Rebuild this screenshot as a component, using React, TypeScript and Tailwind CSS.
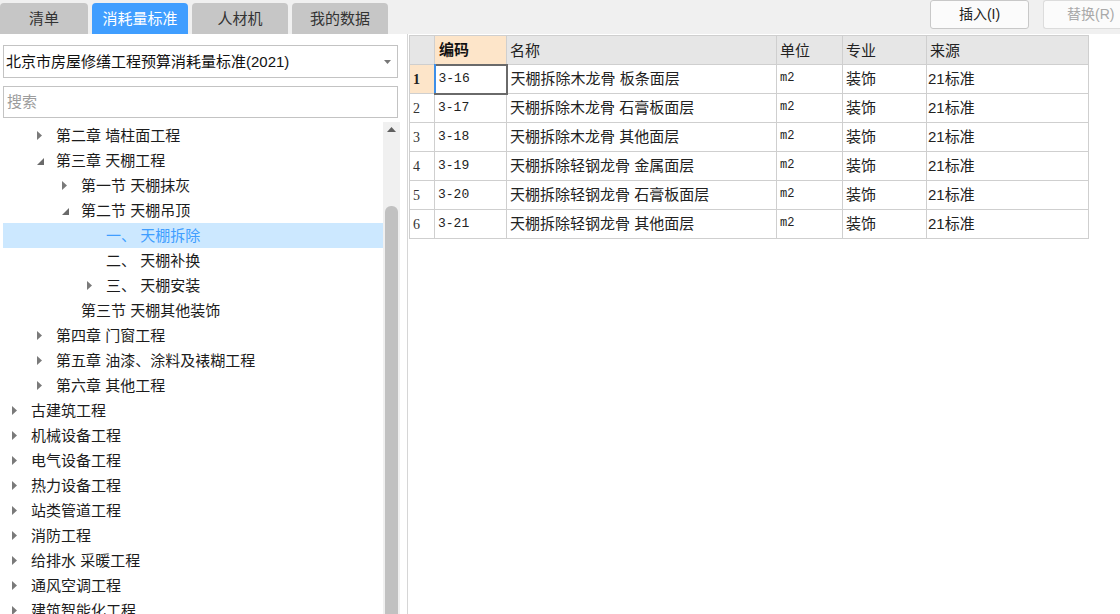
import React from 'react';

type Node = { label: string; level: number; arrow?: 'closed' | 'open'; selected?: boolean };

const tree: Node[] = [
  { label: '第二章 墙柱面工程', level: 1, arrow: 'closed' },
  { label: '第三章 天棚工程', level: 1, arrow: 'open' },
  { label: '第一节 天棚抹灰', level: 2, arrow: 'closed' },
  { label: '第二节 天棚吊顶', level: 2, arrow: 'open' },
  { label: '一、 天棚拆除', level: 3, selected: true },
  { label: '二、 天棚补换', level: 3 },
  { label: '三、 天棚安装', level: 3, arrow: 'closed' },
  { label: '第三节 天棚其他装饰', level: 2 },
  { label: '第四章 门窗工程', level: 1, arrow: 'closed' },
  { label: '第五章 油漆、涂料及裱糊工程', level: 1, arrow: 'closed' },
  { label: '第六章 其他工程', level: 1, arrow: 'closed' },
  { label: '古建筑工程', level: 0, arrow: 'closed' },
  { label: '机械设备工程', level: 0, arrow: 'closed' },
  { label: '电气设备工程', level: 0, arrow: 'closed' },
  { label: '热力设备工程', level: 0, arrow: 'closed' },
  { label: '站类管道工程', level: 0, arrow: 'closed' },
  { label: '消防工程', level: 0, arrow: 'closed' },
  { label: '给排水 采暖工程', level: 0, arrow: 'closed' },
  { label: '通风空调工程', level: 0, arrow: 'closed' },
  { label: '建筑智能化工程', level: 0, arrow: 'closed' },
];

const rows = [
  ['3-16', '天棚拆除木龙骨 板条面层'],
  ['3-17', '天棚拆除木龙骨 石膏板面层'],
  ['3-18', '天棚拆除木龙骨 其他面层'],
  ['3-19', '天棚拆除轻钢龙骨 金属面层'],
  ['3-20', '天棚拆除轻钢龙骨 石膏板面层'],
  ['3-21', '天棚拆除轻钢龙骨 其他面层'],
];

const pad = ['pl-[8px]', 'pl-[33px]', 'pl-[58px]', 'pl-[83px]'];

const Arrow = ({ kind }: { kind?: 'closed' | 'open' }) => (
  <span className="w-[20px] h-[25px] flex items-center shrink-0 pl-[1px]">
    {kind === 'closed' && (
      <svg width="5" height="9" viewBox="0 0 5 9">
        <polygon points="0,0 5,4.5 0,9" fill="#7a7a7a" />
      </svg>
    )}
    {kind === 'open' && (
      <svg width="7" height="7" viewBox="0 0 7 7" className="mt-[2px]">
        <polygon points="7,0 7,7 0,7" fill="#6a6a6a" />
      </svg>
    )}
  </span>
);

export default function App() {
  const tabs = ['清单', '消耗量标准', '人材机', '我的数据'];
  return (
    <div className="w-[1120px] h-[614px] overflow-hidden bg-white flex flex-col font-['Liberation_Sans','Noto_Sans_CJK_SC',sans-serif] text-[#222]">
      {/* top bar */}
      <div className="h-[34px] shrink-0 bg-[#f0f0f0] flex items-end">
        <div className="flex gap-[4px] w-[408px]">
          {tabs.map((t, i) => (
            <div
              key={t}
              className={`w-[96px] first:w-[88px] h-[31px] rounded-t-[4px] flex items-center justify-center text-[15px] leading-none ${
                i === 1 ? 'bg-[#409eff] text-white' : 'bg-[#c6c6c6] text-[#333]'
              }`}
            >
              {t}
            </div>
          ))}
        </div>
        <div className="flex-1 self-stretch flex items-start justify-end gap-[14px]">
          <div className="w-[99px] h-[29px] border border-[#c8c8c8] rounded-[3px] bg-[#fbfbfb] flex items-center justify-center text-[14px] text-[#222]">
            插入(I)
          </div>
          <div className="w-[77px] h-[29px] border border-r-0 border-[#dcdcdc] rounded-l-[3px] bg-[#fbfbfb] flex items-center pl-[23px] text-[14px] text-[#a9a9a9]">
            替换(R)
          </div>
        </div>
      </div>

      {/* body */}
      <div className="flex-1 flex min-h-0">
        {/* left panel */}
        <div className="w-[400px] shrink-0 flex flex-col pl-[3px]">
          <div className="mt-[11px] mr-[2px] h-[33px] border border-[#c3c3c3] flex items-center pl-[2px] pr-[6px]">
            <span className="flex-1 text-[15px] text-[#111] leading-none">北京市房屋修缮工程预算消耗量标准(2021)</span>
            <svg width="7" height="4" viewBox="0 0 7 4">
              <polygon points="0,0 7,0 3.5,4" fill="#777" />
            </svg>
          </div>
          <div className="mt-[8px] mr-[2px] h-[32px] border border-[#c3c3c3] flex items-center pl-[3px] text-[15px] text-[#9c9c9c]">
            搜索
          </div>
          <div className="flex-1 flex min-h-0 mt-[4px]">
            <div className="flex-1 overflow-hidden pt-[1px]">
              {tree.map((n) => (
                <div
                  key={n.label}
                  className={`h-[25px] flex items-center ${pad[n.level]} ${n.selected ? 'bg-[#cce8ff] text-[#409eff]' : 'text-[#1c1c1c]'}`}
                >
                  <Arrow kind={n.arrow} />
                  <span className="text-[15px] leading-none whitespace-pre">{n.label}</span>
                </div>
              ))}
            </div>
            <div className="w-[17px] shrink-0 bg-[#f0f0f0] flex flex-col items-center">
              <svg width="9" height="5" viewBox="0 0 9 5" className="mt-[5px]">
                <polygon points="0,5 9,5 4.5,0" fill="#606060" />
              </svg>
              <div className="mt-[74px] w-[13px] flex-1 bg-[#c1c1c1] rounded-t-[6px]" />
            </div>
          </div>
        </div>

        {/* right panel */}
        <div className="flex-1 ml-[7px] border-l border-[#d6d6d6] pl-[1px] pt-[1px]">
          <table className="border-collapse text-[15px] leading-none">
            <thead>
              <tr className="h-[29px] bg-[#e6e6e6]">
                <th className="w-[25px] border border-[#cfcfcf] p-0" />
                <th className="w-[72px] border border-[#cfcfcf] bg-[#fde5c9] text-left font-bold pl-[4px] text-[#111]">编码</th>
                <th className="w-[270px] border border-[#cfcfcf] text-left font-normal pl-[3px]">名称</th>
                <th className="w-[66px] border border-[#cfcfcf] text-left font-normal pl-[3px]">单位</th>
                <th className="w-[84px] border border-[#cfcfcf] text-left font-normal pl-[3px]">专业</th>
                <th className="w-[162px] border border-[#cfcfcf] text-left font-normal pl-[3px]">来源</th>
              </tr>
            </thead>
            <tbody>
              {rows.map(([code, name], i) => (
                <tr key={code} className="h-[29px]">
                  <td
                    className={`border border-[#cfcfcf] pl-[3px] pt-[2px] text-[14px] font-['Liberation_Serif',serif] ${
                      i === 0 ? 'bg-[#fde5c9] font-bold' : 'text-[#333]'
                    }`}
                  >
                    {i + 1}
                  </td>
                  <td
                    className={`border pl-[3px] pb-[2px] text-[13px] font-['Liberation_Mono',monospace] ${
                      i === 0 ? 'border-2 border-[#6a6a6a] border-l-[#3d8fe8]' : 'border-[#cfcfcf]'
                    }`}
                  >
                    {code}
                  </td>
                  <td className="border border-[#cfcfcf] pl-[3px] pb-[2px] whitespace-pre">{name}</td>
                  <td className="border border-[#cfcfcf] pl-[3px] pb-[2px] text-[12px] font-['Liberation_Mono',monospace]">m2</td>
                  <td className="border border-[#cfcfcf] pl-[3px] pb-[2px]">装饰</td>
                  <td className="border border-[#cfcfcf] pl-[1px] pb-[2px]">21标准</td>
                </tr>
              ))}
            </tbody>
          </table>
        </div>
      </div>
    </div>
  );
}
